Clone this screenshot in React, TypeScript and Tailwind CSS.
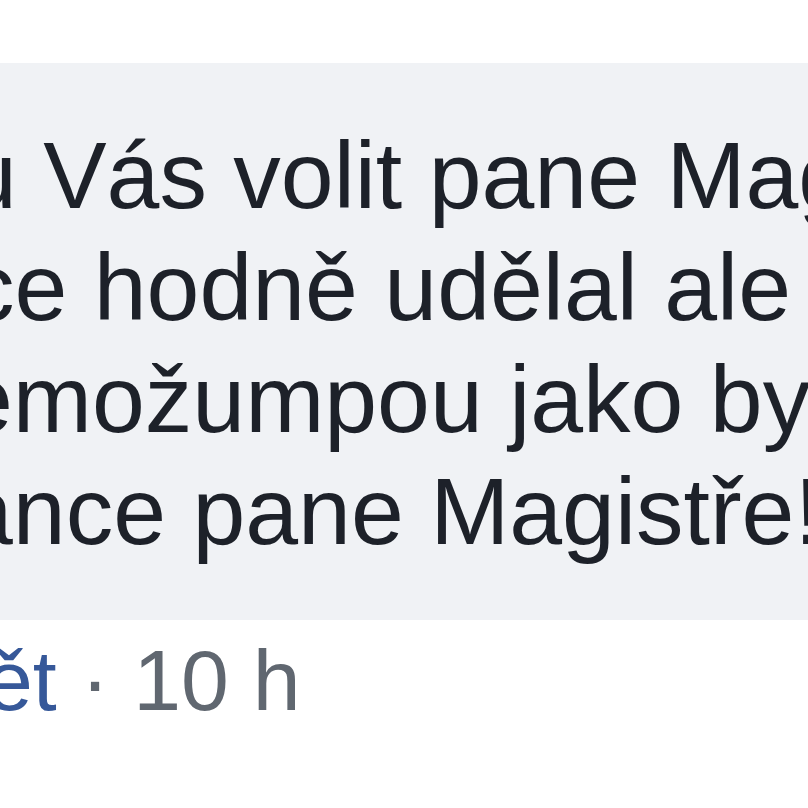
export default function App() {
  return (
    <div
      className="w-[808px] h-[808px] bg-white overflow-hidden pt-[63px]"
      style={{ fontFamily: '"Liberation Sans", Arial, sans-serif' }}
    >
      <div className="bg-[#f0f2f5] pt-[56px] pb-[53px] text-[95px] leading-[112px] text-[#1d2129] whitespace-nowrap">
        <div className="ml-[-36px]">u Vás volit pane Magistře</div>
        <div className="ml-[-33px]">ce hodně udělal ale</div>
        <div className="ml-[-40px]">emožumpou jako by</div>
        <div className="ml-[-40px]">ance pane Magistře!</div>
      </div>
      <div className="mt-[10px] ml-[-15px] text-[86px] leading-[100px] text-[#606770] whitespace-nowrap">
        <span className="text-[#365899]">ět</span> · 10 h
      </div>
    </div>
  );
}
